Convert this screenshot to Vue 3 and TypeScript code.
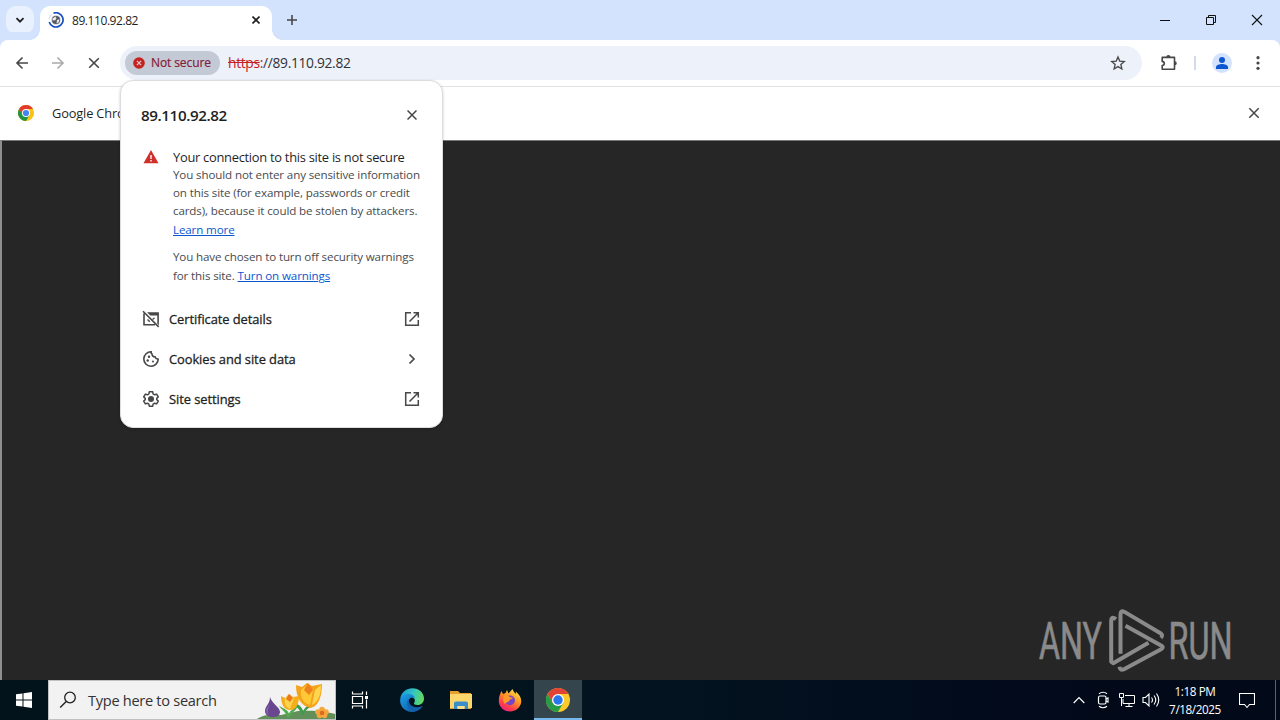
<script setup lang="ts">
import { ref } from 'vue'

interface MenuRow {
  id: string
  label: string
  icon: 'cert' | 'cookie' | 'gear'
  external: boolean
}

const host = ref('89.110.92.82')
const rows: MenuRow[] = [
  { id: 'certificate', label: 'Certificate details', icon: 'cert', external: true },
  { id: 'cookies', label: 'Cookies and site data', icon: 'cookie', external: false },
  { id: 'settings', label: 'Site settings', icon: 'gear', external: true },
]
const blurb: string[] = [
  'You should not enter any sensitive information',
  'on this site (for example, passwords or credit',
  'cards), because it could be stolen by attackers.',
]
</script>

<template>
  <div class="screen">
    <header class="tabstrip">
      <button class="tab-search">
        <svg width="10" height="10" viewBox="0 0 10 10"><path d="M1.500 3.200 5 6.700l3.500-3.500" fill="none" stroke="#1f1f1f" stroke-width="1.800" /></svg>
      </button>
      <div class="tab">
        <svg class="tab-icon" width="16" height="16" viewBox="0 0 16 16">
          <circle cx="8" cy="8" r="4.800" fill="#c5c9cf" />
          <circle cx="8" cy="8" r="4" fill="#55595f" />
          <path d="M4.500 6.500 7.500 4.500l1 2L7 8.500l-2.500-.2ZM9 8l2.500-.8-.8 3L8.500 11.500Z" fill="#e8eaed" />
          <path d="M5.500 1.200A7.100 7.100 0 1 1 1.200 10" fill="none" stroke="#174ec0" stroke-width="1.700" />
          <path d="M1 7.200A7 7 0 0 1 4 2.200" fill="none" stroke="#d5e1f8" stroke-width="1.300" />
        </svg>
        <span class="tab-title">{{ host }}</span>
        <svg width="8" height="8" viewBox="0 0 8 8"><path d="m.5.500 7 7m0-7-7 7" stroke="#1f1f1f" stroke-width="1.600" /></svg>
      </div>
      <svg class="new-tab" width="12" height="12" viewBox="0 0 12 12"><path d="M6 1v10M1 6h10" stroke="#474747" stroke-width="1.600" /></svg>
      <div class="window-controls">
        <svg width="46" height="40" viewBox="0 0 46 40"><path d="M18 20.500h10" stroke="#111" /></svg>
        <svg width="46" height="40" viewBox="0 0 46 40"><path d="M18.500 17.500h7v7h-7Zm2 0v-2h7v7h-2" fill="none" stroke="#111" /></svg>
        <svg width="46" height="40" viewBox="0 0 46 40"><path d="m18 15 10 10m0-10L18 25" stroke="#111" stroke-width="1.100" /></svg>
      </div>
    </header>

    <nav class="toolbar">
      <svg class="nav-icon" width="16" height="16" viewBox="0 0 16 16"><path d="M14 8H3m5.500-5.500L3 8l5.500 5.500" fill="none" stroke="#474747" stroke-width="1.600" /></svg>
      <svg class="nav-icon" width="16" height="16" viewBox="0 0 16 16"><path d="M2 8h11M7.500 2.500 13 8l-5.500 5.500" fill="none" stroke="#ababab" stroke-width="1.600" /></svg>
      <svg class="nav-icon" width="16" height="16" viewBox="0 0 16 16"><path d="m3.200 3.200 9.600 9.600m0-9.600-9.600 9.600" stroke="#474747" stroke-width="1.600" /></svg>
      <div class="omnibox">
        <div class="chip">
          <svg width="12" height="12" viewBox="0 0 12 12"><circle cx="6" cy="6" r="5.800" fill="#c5221f" /><path d="m3.900 3.900 4.200 4.200m0-4.200L3.900 8.100" stroke="#d9cdd8" stroke-width="1.200" /></svg>
          <span class="chip-text">Not secure</span>
        </div>
        <span class="url"><s>https</s><span class="colon">:</span>//{{ host }}</span>
        <svg class="star" width="16" height="16" viewBox="0 0 16 16"><path d="m8 1.900 1.750 4.200 4.550.4-3.450 3 1.030 4.450L8 11.600l-3.880 2.350L5.150 9.500 1.700 6.500l4.550-.4Z" fill="none" stroke="#474747" stroke-width="1.300" /></svg>
      </div>
      <svg class="puzzle" width="18" height="18" viewBox="0 0 18 18"><path d="M2.200 3.400h12.300v11.800H2.200v-3.700c2.800-.4 2.800-3.700 0-4.100Z" fill="none" stroke="#474747" stroke-width="1.600" stroke-linejoin="round" /><path d="M6.300 3.200a2.100 2.100 0 0 1 4.200 0M14.700 7.200a2.100 2.100 0 0 1 0 4.200" fill="#474747" /></svg>
      <i class="divider"></i>
      <svg class="avatar" width="20" height="20" viewBox="0 0 20 20"><circle cx="10" cy="10" r="10" fill="#d3e3fd" /><circle cx="10" cy="7" r="3" fill="#0b57d0" /><path d="M4 16v-1.800c0-2 3.500-3.200 6-3.200s6 1.200 6 3.200V16Z" fill="#0b57d0" /></svg>
      <svg class="kebab" width="4" height="16" viewBox="0 0 4 16"><g fill="#474747"><circle cx="2" cy="2.700" r="1.600" /><circle cx="2" cy="8" r="1.600" /><circle cx="2" cy="13.300" r="1.600" /></g></svg>
    </nav>

    <section class="infobar">
      <svg width="16" height="16" viewBox="0 0 16 16">
        <circle cx="8" cy="8" r="8" fill="#fbc116" />
        <path d="M1.070 4A8 8 0 0 1 14.930 4H8L4.540 10Z" fill="#e33b2e" />
        <path d="M1.070 4A8 8 0 0 0 8 16l3.460-6H4.540Z" fill="#229342" />
        <circle cx="8" cy="8" r="4" fill="#fff" /><circle cx="8" cy="8" r="3.100" fill="#4285f4" />
      </svg>
      <span class="info-text">Google Chrome</span>
      <svg class="info-close" width="12" height="12" viewBox="0 0 12 12"><path d="m1.300 1.300 9.400 9.400m0-9.400-9.400 9.400" stroke="#474747" stroke-width="1.500" /></svg>
    </section>

    <main class="page">
      <svg class="watermark" width="194" height="64" viewBox="0 0 194 64">
        <g class="brand" fill="#8a8a8a" stroke="#8a8a8a" stroke-width=".7">
          <text x="0" y="50" textLength="63" lengthAdjust="spacingAndGlyphs">ANY</text>
          <text x="129.500" y="50" textLength="64" lengthAdjust="spacingAndGlyphs">RUN</text>
        </g>
        <g fill="none" stroke="#8a8a8a" stroke-width="4" stroke-linejoin="round" transform="translate(-1.500 -1.300)">
          <path d="M78.500 11.500Q73.700 8 73.700 13.500V54l2 1.600L111 35" />
          <path d="M83 46V6.500Q83 2 87 4.200l36 21.300q3 2 .3 4.500" />
          <path d="m88 18 36 20q2.500 1.600 0 3.200L86 61.700q-3.500 1.300-4-2.700" />
        </g>
      </svg>
    </main>

    <footer class="taskbar">
      <div class="start">
        <svg width="16" height="16" viewBox="0 0 16 16"><path d="M0 2.300 6.500 1.400v6.100H0Zm7.500-1L16 0v7.500H7.500ZM0 8.500h6.500v6.100L0 13.700Zm7.500 0H16V16l-8.500-1.300Z" fill="#fff" /></svg>
      </div>
      <div class="search">
        <svg class="lens" width="18" height="18" viewBox="0 0 18 18"><circle cx="11" cy="6.500" r="5.300" fill="none" stroke="#222" stroke-width="1.300" /><path d="m7.200 10.500-6 6" stroke="#222" stroke-width="1.400" /></svg>
        <span class="search-text">Type here to search</span>
        <svg class="flowers" width="78" height="38" viewBox="0 0 78 38">
          <path d="M0 38c5-4 12-5 24-4l17-4c14-1 28 0 37 3v5Z" fill="#63905a" />
          <path d="M45 34C43 28 38 25 35 21c7 2 10 5 11 9 4-7 10-8 15-12-3 8-13 8-14 16Z" fill="#3f9a4a" />
          <path d="M30 36c-1-5-5-7-8-11 6 3 9 4 10 8 1-4 6-6 9-9-2 7-7 7-8 12Z" fill="#51ab4f" />
          <path d="M13 16c2 7 10 10 10 15 0 3-3 5-7 5s-8-2-8-6c0-5 5-7 5-14Z" fill="#68478f" />
          <path d="M13 20c0 6-4 9-1 14-2-1-3-3-3-5 1-3 4-4 4-9Z" fill="#8665ae" />
          <path d="m24 15 4 2 4-4 4 3 6-1c0 8-3 14-9 14s-9-6-9-14Z" fill="#f4ae1c" />
          <path d="m28 17 4-3 5 3-4 11c-4-2-6-5-5-11Z" fill="#ffd34e" />
          <path d="m29 18 3-5 4 4-3 4Z" fill="#ea791c" />
          <path d="m39 4 6 2 5-4 5 3 10-2c0 11-3 22-11 24C44 25 39 17 39 4Z" fill="#f3a41a" />
          <path d="m44 9 7-6 5 6-3 15C46 22 43 16 44 9Z" fill="#ffc936" />
          <path d="m64 4-6 5-3 15c6-3 9-10 9-20Z" fill="#ffd44f" />
          <path d="m47 9 4-7 5 7-4 5Z" fill="#ee801d" />
          <g fill="#f5a63c"><circle cx="65" cy="28.500" r="2.800" /><circle cx="69" cy="31" r="2.800" /><circle cx="67.500" cy="34.500" r="2.800" /><circle cx="62.500" cy="34.500" r="2.800" /><circle cx="61" cy="31" r="2.800" /></g><circle cx="65" cy="32" r="2.300" fill="#d86b20" />
        </svg>
      </div>
      <div class="app">
        <svg width="18" height="18" viewBox="0 0 18 18"><g fill="none" stroke="#fff" stroke-width="1.200"><path d="M1.500 5.500h10v7h-10Zm0-5V3h10V.5m-10 17V15h10v2.500M15.500.5V4m0 4.500v9" /></g><path d="M14 5h3v3h-3Z" fill="#fff" /></svg>
      </div>
      <div class="app app-edge">
        <svg width="24" height="24" viewBox="0 0 24 24">
          <defs>
            <linearGradient id="edgeTop" x1="0" x2="1" y1=".4" y2=".6"><stop stop-color="#189bd9" /><stop offset=".55" stop-color="#36c8ba" /><stop offset="1" stop-color="#67db55" /></linearGradient>
            <linearGradient id="edgeBody" x1="0" x2="1" y1="0" y2="1"><stop stop-color="#1ba0e6" /><stop offset="1" stop-color="#0c4f9e" /></linearGradient>
          </defs>
          <path d="M.3 10C1.500 4 6.500.2 12.300.2 19 .2 24 5 24 10.500c0 4-3 6.500-6.500 6.500-2.500 0-4-1-3.400-2 1.500-2 1-5.800-3-5.800C6 9.200 2 12 .3 10Z" fill="url(#edgeTop)" />
          <path d="M.1 12.500C.3 8.500 4 6 8.500 6c3.500 0 6 1.800 6.500 4-4-2-7 1-6 5 1.200 4.500 7.500 6 13.500 3-2 3.600-6 6-10.500 6C5.500 24 0 19 .1 12.500Z" fill="url(#edgeBody)" />
          <path d="M8.800 10.500C5 15 8 22 14 23.600 18 23 21 20.500 22.500 18c-6 3-12 .8-13.300-3.500-.5-1.500-.6-3-.4-4Z" fill="#1560ab" />
        </svg>
      </div>
      <div class="app">
        <svg width="22" height="20" viewBox="0 0 22 20"><path d="M0 1h8l2 2h11v16H0Z" fill="#e7a02f" /><path d="M0 4h22v14H0Z" fill="#fcd76b" /><path d="M4 19v-6q0-1.500 2-1.500h10q2 0 2 1.500v6h-3.500v-3h-7v3Z" fill="#3b8fc9" /><path d="M7.500 16h7v3h-7Z" fill="#fbe08b" /></svg>
      </div>
      <div class="app">
        <svg width="24" height="24" viewBox="0 0 24 24">
          <defs><linearGradient id="fox" x1=".8" x2=".2" y1="0" y2="1"><stop stop-color="#ffe94a" /><stop offset=".4" stop-color="#ff9822" /><stop offset=".75" stop-color="#ff3d4d" /><stop offset="1" stop-color="#e61a83" /></linearGradient></defs>
          <path d="M3.500 3 5 6l2.500-1L9 2l1.500 3.500L14.500 1c1 2.500 2 3.500 3.500 5l-.2-2.500C22 7 23.500 10.500 23.200 14c-.6 5.500-5.500 9.500-11.200 9.500C5.500 23.500.7 18.500.8 12.500.8 8.500 2 6 3.500 3Z" fill="url(#fox)" />
          <circle cx="12" cy="12.300" r="4.900" fill="#7645c8" /><path d="M6 8c3-1.500 5-.5 6 1.200l3 .5c-.5 1.500-3 1.400-3.500 2.300-.4 2.500-4 2-4.500 4C5 14 4.800 10.500 6 8Z" fill="#ff9a28" />
        </svg>
      </div>
      <div class="app active">
        <svg width="24" height="24" viewBox="0 0 16 16">
          <circle cx="8" cy="8" r="8" fill="#fcca2b" />
          <path d="M1.070 4A8 8 0 0 1 14.930 4H8L4.540 10Z" fill="#e14435" />
          <path d="M1.070 4A8 8 0 0 0 8 16l3.460-6H4.540Z" fill="#289b49" />
          <circle cx="8" cy="8" r="4" fill="#fff" /><circle cx="8" cy="8" r="3.150" fill="#2877ed" />
        </svg>
      </div>
      <div class="tray">
        <svg width="12" height="8" viewBox="0 0 12 8"><path d="m.7 7 5.300-5.500L11.300 7" fill="none" stroke="#fff" stroke-width="1.200" /></svg>
        <svg class="meet" width="12" height="18" viewBox="0 0 12 18"><rect x="1.500" y="5" width="7.500" height="8" rx="1.500" fill="none" stroke="#fff" stroke-width="1.200" /><path d="M9 8l2-1v4L9 10M2 2.700q4-2.800 8 0m-8 12.600q4 2.800 8 0" fill="none" stroke="#fff" stroke-width="1.100" /></svg>
        <svg class="net" width="17" height="15" viewBox="0 0 17 15"><path d="M6 2.500h9.500v8H4V6m6 4.500v3M6.500 13.500h7M.5.500h4v4h-4Zm2 4V13" fill="none" stroke="#fff" /></svg>
        <svg class="sound" width="18" height="16" viewBox="0 0 18 16"><path d="M1 5.500h2.500L7 2v12l-3.500-3.500H1ZM9.500 5.500q2 2.500 0 5M12 3.500q3.500 4.500 0 9M14.500 1.500q4.500 6.500 0 13" fill="none" stroke="#fff" stroke-width="1.100" /></svg>
        <div class="clock"><span>1:18 PM</span><span>7/18/2025</span></div>
        <svg class="note" width="16" height="17" viewBox="0 0 16 17"><path d="M.5 1.500h15v11h-5L8 15.500l-2.500-3h-5Z" fill="none" stroke="#fff" stroke-width="1.100" /></svg>
        <i class="peek"></i>
      </div>
    </footer>

    <aside class="bubble">
      <div class="bubble-head">
        <h1>{{ host }}</h1>
        <svg width="10" height="10" viewBox="0 0 10 10"><path d="m.5.500 9 9m0-9-9 9" stroke="#474747" stroke-width="1.500" /></svg>
      </div>
      <div class="security">
        <svg class="warn" width="16" height="14" viewBox="0 0 16 14"><path d="M8 0 15.500 13.200H.5Z" fill="#d0302b" /><path d="M7.300 5h1.400v4H7.300Zm0 5h1.400v1.500H7.300Z" fill="#fff" /></svg>
        <div>
          <h2>Your connection to this site is not secure</h2>
          <p class="desc"><span v-for="(line, i) in blurb" :key="i">{{ line }}</span><a class="learn">Learn more</a></p>
          <p class="desc second"><span>You have chosen to turn off security warnings</span><span class="last">for this site. <a>Turn on warnings</a></span></p>
        </div>
      </div>
      <ul class="rows">
        <li v-for="row in rows" :key="row.id">
          <svg v-if="row.icon === 'cert'" width="18" height="18" viewBox="0 0 18 18"><path d="M5 2.200h11.900v13L15.300 13.600V5.500H8.300Z" fill="#474747" /><path d="M2 3.500v11.300h11M1 1.200l15.700 15.700" fill="none" stroke="#474747" stroke-width="1.600" /><path d="m5.500 9.500 2.300 2.300M10.500 9.500l2-1.500" stroke="#474747" stroke-width="1.400" /></svg>
          <svg v-else-if="row.icon === 'cookie'" width="18" height="18" viewBox="0 0 18 18"><path d="M9.300 1.800A7.200 7.200 0 1 0 16.200 9c-1.700.2-3-.8-3-2.300-2 .2-3.300-1-3.100-2.700-1-.2-1.300-1.200-.8-2.200Z" fill="none" stroke="#474747" stroke-width="1.600" stroke-linejoin="round" /><g fill="#474747"><circle cx="7" cy="6.700" r="1.200" /><circle cx="5.700" cy="10.500" r="1.200" /><circle cx="11" cy="11.500" r="1" /></g></svg>
          <svg v-else width="18" height="18" viewBox="0 0 18 18"><path d="M7.300 1.800h3.400l.4 2.100 1.500.9 2-.7 1.700 2.900-1.600 1.400v1.200l1.600 1.400-1.700 2.900-2-.7-1.500.9-.4 2.100H7.300l-.4-2.100-1.500-.9-2 .7-1.700-2.900 1.600-1.400V8.400L1.700 7l1.700-2.900 2 .7 1.500-.9Z" fill="none" stroke="#474747" stroke-width="1.500" stroke-linejoin="round" /><circle cx="9" cy="9" r="3" fill="#474747" /></svg>
          <span class="row-label">{{ row.label }}</span>
          <svg v-if="row.external" width="16" height="16" viewBox="0 0 16 16"><path d="M7 1.700H1.700v12.600h12.600V9M9.500 1.700h4.800v4.800M14 2 5.500 10.500" fill="none" stroke="#474747" stroke-width="1.500" /></svg>
          <svg v-else width="16" height="16" viewBox="0 0 16 16"><path d="m5.500 3.500 4.500 4.500-4.500 4.500" fill="none" stroke="#474747" stroke-width="1.700" /></svg>
        </li>
      </ul>
    </aside>
  </div>
</template>

<style>
body { margin: 0; overflow: hidden; }
</style>

<style scoped>
* { box-sizing: border-box; }
.screen { position: relative; width: 1280px; height: 720px; display: flex; flex-direction: column; overflow: hidden; background: #fff; font-family: "Open Sans", "Noto Sans", sans-serif; color: #1f1f1f; white-space: nowrap; }
svg { display: block; flex: none; }
.tabstrip { height: 40px; flex: none; display: flex; align-items: flex-start; background: #d3e3fd; padding-left: 6px; }
.tab-search { width: 28px; height: 28px; margin: 6px 6px 0 0; border: 0; padding: 0; border-radius: 10px; background: #e9f1fe; display: grid; place-items: center; }
.tab { position: relative; width: 232px; height: 34px; margin-top: 6px; padding: 0 12px 6px 8px; display: flex; align-items: center; background: #fff; border-radius: 10px 10px 0 0; }
.tab::before, .tab::after { content: ""; position: absolute; bottom: 0; width: 10px; height: 10px; }
.tab::before { left: -10px; background: radial-gradient(circle at 0 0, transparent 9.5px, #fff 10px); }
.tab::after { right: -10px; background: radial-gradient(circle at 100% 0, transparent 9.5px, #fff 10px); }
.tab-title { margin-left: 8px; padding-top: 1px; flex: 1; font-size: 12px; letter-spacing: -.43px; line-height: 16px; }
.new-tab { margin: 14px 0 0 14px; }
.window-controls { display: flex; margin-left: auto; }
.toolbar { height: 47px; flex: none; display: flex; align-items: center; padding: 0 20px 1px 14px; border-bottom: 1px solid #e0e2e6; background: #fff; border-radius: 8px 8px 0 0; box-shadow: 0 -8px 0 #d3e3fd; }
.nav-icon { margin-right: 20px; }
.omnibox { width: 1022px; flex: none; height: 34px; margin-left: -2px; padding: 0 16px 0 5px; display: flex; align-items: center; border-radius: 17px; background: #edf1fa; }
.chip { width: 95px; height: 24px; padding-left: 8px; display: flex; align-items: center; border-radius: 12px; background: #c4c9d6; }
.chip-text { margin-left: 6px; color: #85203a; font-size: 12px; letter-spacing: -.1px; -webkit-text-stroke: .2px #85203a; }
.url { margin-left: 8px; font-size: 13.800px; letter-spacing: -.32px; color: #303238; }
.url s, .colon { color: #c5221f; }
.star { margin-left: auto; }
.puzzle { margin-left: 18px; }
.divider { width: 2px; height: 14px; margin: 0 17px 0 16px; background: #d3dbe8; }
.avatar { margin-left: -1px; }
.kebab { margin-left: auto; }
.infobar { height: 53px; flex: none; display: flex; align-items: center; padding: 0 20px 1px 18px; background: #fff; }
.info-text { margin-left: 18px; font-size: 12.800px; letter-spacing: -.15px; }
.info-close { margin-left: auto; }
.page { position: relative; height: 540px; flex: none; background: #262626; border-left: 2px solid #8e8e8e; border-top: 1px solid #777; }
.watermark { position: absolute; left: 1037px; top: 468px; overflow: visible; }
.brand { font-family: Roboto, sans-serif; font-size: 52px; font-weight: 400; }
.taskbar { height: 40px; flex: none; display: flex; background: linear-gradient(90deg, #02131b, #031420 50%, #020b1c 75%, #020918); color: #fff; }
.start { width: 48px; display: grid; place-items: center; }
.search { width: 288px; display: flex; align-items: center; border: 1px solid #c0c0c0; background: #f2f2f2; color: #333; overflow: hidden; }
.lens { margin-left: 10px; }
.search-text { margin-left: 11px; font-size: 14.600px; letter-spacing: -.3px; }
.flowers { margin-left: auto; }
.app { width: 49px; display: grid; place-items: center; }
.app:nth-child(3) { width: 51px; padding-right: 3px; }
.app.active { width: 48px; background: #34454d; box-shadow: inset 0 -2px #76b9ed; }
.tray { margin-left: auto; display: flex; align-items: center; }
.meet { margin-left: 12px; }
.net { margin-left: 10px; }
.sound { margin-left: 6px; }
.clock { width: 58px; margin: 0 1px 1px 6px; display: flex; flex-direction: column; align-items: center; font-size: 11.700px; line-height: 18px; letter-spacing: -.4px; }
.note { margin-left: 14px; }
.peek { width: 1px; height: 40px; margin: 0 4px 0 20px; background: #5c6270; }
.bubble { position: absolute; left: 120px; top: 80px; width: 323px; height: 348px; padding: 19px 21px; border: 1px solid #dcdde0; border-radius: 13px; background: #fff; box-shadow: 0 1px 3px rgba(0,0,0,.2); }
.bubble-head { display: flex; align-items: center; justify-content: space-between; height: 30px; padding-right: 4px; margin-left: -1px; }
h1 { margin: 0; font-size: 15.200px; letter-spacing: -.4px; font-weight: 600; }
.security { display: flex; margin-top: 18px; }
.warn { margin: 2px 14px 0 1px; }
h2 { margin: 0; font-size: 12.900px; letter-spacing: -.28px; line-height: 18px; font-weight: 400; }
.desc { margin: 0; display: flex; flex-direction: column; align-items: flex-start; font-size: 11.600px; letter-spacing: -.13px; line-height: 18px; color: #484b50; }
.desc a { color: #0b57d0; text-decoration: underline; }
.learn { line-height: 20px; }
.second { margin-top: 8px; }
.last { line-height: 20px; }
.rows { list-style: none; margin: 13px 0 0; padding: 0; }
.rows li { height: 40px; display: flex; align-items: center; padding-right: 1px; }
.row-label { flex: 1; margin-left: 9px; font-size: 12.900px; letter-spacing: -.07px; -webkit-text-stroke: .3px #1f1f1f; }
</style>
